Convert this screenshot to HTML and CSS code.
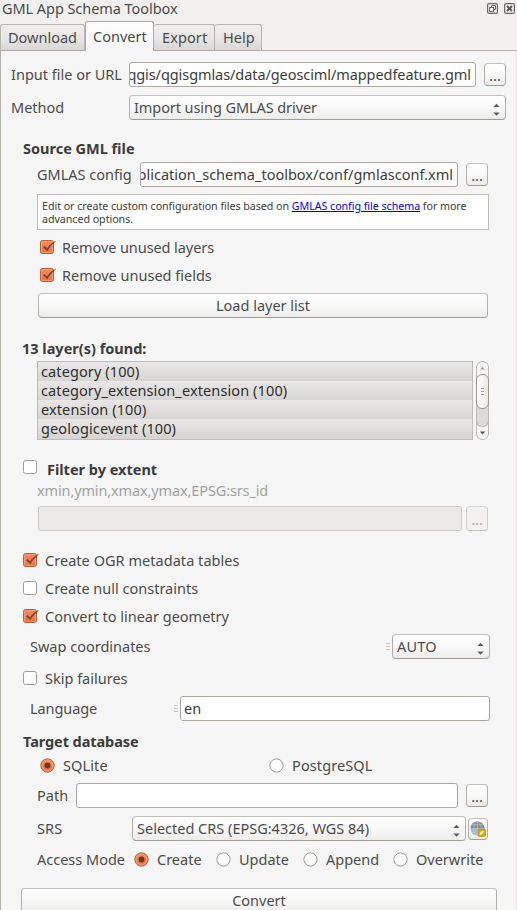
FILE: index.html
```
<!DOCTYPE html>
<html lang="en">
<head>
<meta charset="utf-8">
<title>GML App Schema Toolbox</title>
<link rel="stylesheet" href="styles.css">
</head>
<body>
<svg class="defs" width="0" height="0">
  <defs>
    <linearGradient id="orange" x1="0" y1="0" x2="0" y2="1"><stop offset="0" stop-color="#f58e66"/><stop offset="1" stop-color="#ee6f3f"/></linearGradient>
    <symbol id="checked" viewBox="0 0 17 16">
      <rect x=".5" y="1.5" width="13" height="13" rx="2" fill="url(#orange)" stroke="#bf5c37"/>
      <rect x="1.5" y="2.5" width="11" height="11" rx="1" fill="none" stroke="#f9a47f" stroke-opacity=".7"/>
      <path d="M3 8.200 4.800 7 7 9.600C9 6.400 11.500 4 15.500 2L15.800 2.400C12 5.200 9.500 8.300 7.300 12.200Z" fill="#7a4330"/>
    </symbol>
    <symbol id="unchecked" viewBox="0 0 17 16">
      <rect x=".5" y="1.500" width="13" height="13" rx="2" fill="#fff" stroke="#a09b93"/>
    </symbol>
    <symbol id="on" viewBox="0 0 15 15">
      <circle cx="7.500" cy="7.500" r="6.700" fill="url(#orange)" stroke="#bf5c37"/>
      <circle cx="7.500" cy="7.500" r="5.500" fill="none" stroke="#f9a884" stroke-opacity=".8"/>
      <circle cx="7.500" cy="7.500" r="3" fill="#693a2a"/>
    </symbol>
    <symbol id="off" viewBox="0 0 15 15">
      <circle cx="7.500" cy="7.500" r="6.600" fill="#fff" stroke="#9d9890"/>
    </symbol>
    <symbol id="updown" viewBox="0 0 7 13">
      <path d="M.4 4 3.500.8 6.600 4ZM.4 9.500 3.500 12.700 6.600 9.500Z" fill="#5e5c58"/>
    </symbol>
    <symbol id="grip" viewBox="0 0 4 8">
      <path d="M0 .5H4M0 3.500H4M0 6.500H4" stroke="#cbc9c6"/>
    </symbol>
  </defs>
</svg>

<header class="titlebar">
  <span>GML App Schema Toolbox</span>
  <span class="window-buttons">
    <svg width="11" height="11" viewBox="0 0 11 11"><rect x=".6" y=".6" width="9.800" height="9.800" rx="1.500" fill="none" stroke="#686762" stroke-width="1.200"/><path d="M4.500 4V2.500H8.500V6.500H7" fill="none" stroke="#686762"/><rect x="2.500" y="4.500" width="4" height="4" fill="none" stroke="#686762"/></svg>
    <svg width="11" height="11" viewBox="0 0 11 11"><rect x=".6" y=".6" width="9.800" height="9.800" rx="1.500" fill="none" stroke="#686762" stroke-width="1.200"/><path d="M3 3 8 8M8 3 3 8" stroke="#5c5b57" stroke-width="2"/></svg>
  </span>
</header>

<nav class="tabs">
  <span class="tab download">Download</span>
  <span class="tab active">Convert</span>
  <span class="tab export">Export</span>
  <span class="tab help">Help</span>
</nav>

<main class="panel">
  <div class="row input-file">
    <label class="label">Input file or URL</label>
    <div class="field clipped tight"><span>qgis/qgisgmlas/data/geosciml/mappedfeature.gml</span></div>
    <button class="button dots">...</button>
  </div>
  <div class="row method">
    <label class="label">Method</label>
    <div class="button select"><span class="tight">Import using GMLAS driver</span><svg width="7" height="13"><use href="#updown"/></svg></div>
  </div>

  <h2 class="source">Source GML file</h2>
  <div class="row indent config">
    <label class="label">GMLAS config</label>
    <div class="field clipped"><span>plication_schema_toolbox/conf/gmlasconf.xml</span></div>
    <button class="button dots">...</button>
  </div>
  <div class="info">Edit or create custom configuration files based on <a>GMLAS config file schema</a> for more<br>advanced options.</div>
  <div class="check nested first"><svg width="17" height="16"><use href="#checked"/></svg><span class="tight">Remove unused layers</span></div>
  <div class="check nested"><svg width="17" height="16"><use href="#checked"/></svg><span>Remove unused fields</span></div>
  <button class="button load">Load layer list</button>

  <h2 class="found">13 layer(s) found:</h2>
  <div class="layers">
    <ul class="list wide">
      <li>category (100)</li>
      <li>category_extension_extension (100)</li>
      <li>extension (100)</li>
      <li>geologicevent (100)</li>
    </ul>
    <div class="scrollbar">
      <svg width="13" height="12" viewBox="0 0 13 12"><path d="M4 8.500 6.500 5.800 9 8.500Z" fill="#a5a29d"/></svg>
      <div class="thumb"><i></i><i></i><i></i></div>
      <div class="track"></div>
      <svg width="13" height="13" viewBox="0 0 13 13"><path d="M3.800 4.500H9.200L6.500 7.500Z" fill="#5e5c58"/></svg>
    </div>
  </div>

  <div class="check filter"><svg width="17" height="16"><use href="#unchecked"/></svg><b>Filter by extent</b></div>
  <div class="hint">xmin,ymin,xmax,ymax,EPSG:srs_id</div>
  <div class="row indent extent">
    <div class="field disabled"></div>
    <button class="button dots off">...</button>
  </div>

  <div class="check ogr"><svg width="17" height="16"><use href="#checked"/></svg><span class="ogr-text">Create OGR metadata tables</span></div>
  <div class="check"><svg width="17" height="16"><use href="#unchecked"/></svg><span>Create null constraints</span></div>
  <div class="check"><svg width="17" height="16"><use href="#checked"/></svg><span>Convert to linear geometry</span></div>
  <div class="row option swap">
    <label class="label">Swap coordinates</label>
    <svg width="4" height="8"><use href="#grip"/></svg>
    <div class="button select"><span class="wider">AUTO</span><svg width="7" height="13"><use href="#updown"/></svg></div>
  </div>
  <div class="check skip"><svg width="17" height="16"><use href="#unchecked"/></svg><span>Skip failures</span></div>
  <div class="row option language">
    <label class="label tight">Language</label>
    <svg width="4" height="8"><use href="#grip"/></svg>
    <div class="field">en</div>
  </div>

  <h2 class="target tight">Target database</h2>
  <div class="radios engines">
    <span class="radio wide"><svg width="15" height="15"><use href="#on"/></svg>SQLite</span>
    <span class="radio wide"><svg width="15" height="15"><use href="#off"/></svg>PostgreSQL</span>
  </div>
  <div class="row indent path">
    <label class="label">Path</label>
    <div class="field"></div>
    <button class="button dots">...</button>
  </div>
  <div class="row indent srs">
    <label class="label wide">SRS</label>
    <div class="button select"><span>Selected CRS (EPSG:4326, WGS 84)</span><svg width="7" height="13"><use href="#updown"/></svg></div>
    <button class="button globe">
      <svg width="16" height="16" viewBox="0 0 16 16">
        <circle cx="7.500" cy="7.500" r="6.900" fill="#94b9dd"/>
        <path d="M.6 7.500a6.900 6.900 0 0 1 13.800 0Z" fill="#85898c"/>
        <path d="M7.500.6V14.400M.6 7.500H14.400M1.800 3.800H13.200M1.800 11.200H13.200" stroke="#c5cdd3" stroke-width=".6"/>
        <ellipse cx="7.500" cy="7.500" rx="3.600" ry="6.900" fill="none" stroke="#c5cdd3" stroke-width=".6"/>
        <rect x="8" y="8" width="7.500" height="7.500" rx="1" fill="#cfa90f" stroke="#b08d08" stroke-width=".6"/>
        <path d="M9.500 14 10 12 12.500 9.500 14 11 11.500 13.500Z" fill="#fff6d0"/>
      </svg>
    </button>
  </div>
  <div class="radios modes">
    <label class="label">Access Mode</label>
    <span class="radio"><svg width="15" height="15"><use href="#on"/></svg>Create</span>
    <span class="radio"><svg width="15" height="15"><use href="#off"/></svg>Update</span>
    <span class="radio"><svg width="15" height="15"><use href="#off"/></svg>Append</span>
    <span class="radio"><svg width="15" height="15"><use href="#off"/></svg>Overwrite</span>
  </div>
  <button class="button convert">Convert</button>
</main>
</body>
</html>
```
FILE: styles.css
```
* { box-sizing: border-box; }
body {
  margin: 0;
  width: 517px;
  height: 910px;
  overflow: hidden;
  display: flex;
  flex-direction: column;
  background: #f2f1f0;
  color: #4c4c4c;
  font: 14.5px/19px "Noto Sans", sans-serif;
  white-space: nowrap;
}
svg { display: block; flex: none; }
.defs { position: absolute; }
.tight { letter-spacing: -.08px; }
.wide { letter-spacing: .11px; }
.wider { letter-spacing: .2px; }

.titlebar {
  display: flex;
  justify-content: space-between;
  height: 21px;
  padding: 0 2px;
  line-height: 17px;
  letter-spacing: -.06px;
  flex: none;
}
.window-buttons { display: flex; gap: 6px; padding-top: 3px; }

.tabs { display: flex; align-items: flex-end; height: 30px; flex: none; }
.tab {
  height: 27px;
  padding: 0 0 0 7px;
  line-height: 25px;
  border: 1px solid #b9b5b0;
  border-left: 0;
  border-bottom-color: #aeaaa3;
  border-radius: 3px 3px 0 0;
  background: linear-gradient(#efeeed, #e9e8e7 50%, #d9d7d5);
}
.download { width: 85px; border-left: 1px solid #b9b5b0; }
.active {
  width: 69px;
  height: 30px;
  line-height: 29px;
  border: 1px solid #aeaaa3;
  border-bottom: 0;
  background: linear-gradient(#fdfdfd, #f6f6f6);
}
.export { width: 61px; padding-left: 8px; letter-spacing: .1px; }
.help { width: 47px; padding-left: 8px; }
.tabs::after { content: ""; flex: 1; border-bottom: 1px solid #b5b1ab; }

.panel {
  flex: none;
  display: flex;
  flex-direction: column;
  height: 880px;
  padding-top: 11px;
  background: #f6f6f6;
  border-left: 1px solid #b5b1ab;
  border-right: 1px solid #e3e1df;
}
.row { display: flex; align-items: center; height: 25px; padding-left: 10px; }
.indent { padding-left: 36px; }
.button {
  display: flex;
  align-items: center;
  justify-content: center;
  height: 25px;
  padding: 0;
  flex: none;
  color: inherit;
  font: inherit;
  border: 1px solid;
  border-color: #c4c1bd #b4b0aa #a19d96;
  border-radius: 4px;
  background: linear-gradient(#fff, #f9f9f9 50%, #ededeb);
}
.dots { width: 22px; height: 23px; padding-top: 2px; letter-spacing: -.1px; }
.off { height: 25px; color: #a9a9a9; border-color: #d8d6d4 #d0cecb #c6c3bf; background: #f3f2f1; }
.select { justify-content: space-between; padding: 0 5px 0 4px; }
.select svg { margin-top: 4px; }
.field {
  height: 25px;
  flex: none;
  padding: 0 4px;
  line-height: 22px;
  color: #3c3c3c;
  background: #fff;
  border: 1px solid #aca8a1;
  border-radius: 3px;
}
.clipped { display: flex; justify-content: flex-end; overflow: hidden; padding: 0 4px 0 0; }
.disabled { width: 424px; background: #ebeae8; border-color: #cfccc8; }
h2 { margin: 0 0 0 22px; font: inherit; font-weight: bold; color: #3c3c3c; height: 19px; }

.input-file .label { width: 118px; }
.input-file .field { width: 347px; margin-right: 8px; }
.method { margin-top: 8px; }
.method .label { width: 118px; }
.method .select { width: 377px; }

.source { margin-top: 19px; }
.config { margin-top: 4px; }
.config .label { width: 103px; }
.config .field { width: 318px; margin-right: 8px; }
.info {
  width: 452px;
  height: 36px;
  margin: 7px 0 0 36px;
  padding: 5px 4px;
  color: #3c3c3c;
  background: #fff;
  border: 1px solid #c0bdb8;
  font-size: 10.7px;
  line-height: 13px;
  letter-spacing: -.045px;
}
.info a { color: #00f; text-decoration: underline; }
.check { display: flex; align-items: center; height: 19px; margin: 9px 0 0 22px; gap: 5px; }
.check svg { margin-top: -1px; }
.nested { margin-left: 39px; }
.first { margin-top: 8px; }
.load { width: 450px; margin: 8px 0 0 37px; }
.ogr-text { letter-spacing: .04px; }

.found { margin: 21px 0 0 21px; }
.layers { display: flex; gap: 3px; height: 79px; margin: 3px 0 0 36px; }
.list {
  width: 436px;
  margin: 0;
  padding: 0 0 1px;
  list-style: none;
  border: 1px solid #bfbcb6;
  background: #d7d6d4;
  color: #2e2e2e;
}
.list li { height: 19px; padding-left: 3px; background: linear-gradient(#e9e8e7, #d7d6d4); }
.scrollbar {
  display: flex;
  flex-direction: column;
  width: 13px;
  height: 79px;
  border-radius: 7px;
  background: #f7f6f6;
  box-shadow: inset 0 0 0 1px #bbb8b3;
}
.thumb {
  position: relative;
  height: 35px;
  flex: none;
  display: flex;
  flex-direction: column;
  align-items: center;
  justify-content: center;
  gap: 2px;
  border: 1px solid #9b9790;
  border-radius: 6px;
  background: linear-gradient(90deg, #fff, #ebeae9);
  margin-top: 1px;
}
.thumb i { width: 3px; height: 1px; background: #a5a29d; }
.track {
  flex: 1;
  margin-top: -6px;
  border: 1px solid #bbb8b3;
  border-top: 0;
  border-radius: 0 0 6px 6px;
  background: #dcdbd9;
}

.filter { margin-top: 20px; gap: 7px; color: #3c3c3c; }
.filter svg { margin-top: -5px; }
.hint { margin: 2px 0 0 36px; color: #a2a2a2; letter-spacing: -.13px; }
.extent { margin-top: 6px; padding-left: 37px; }
.extent .field { margin-right: 4px; }
.ogr { margin-top: 20px; }
.option { padding-left: 29px; }
.swap { margin-top: 8px; }
.swap .label { width: 356px; }
.swap .select { width: 98px; margin-left: 2px; }
.skip { margin-top: 10px; }
.language { margin-top: 8px; }
.language .label { width: 144px; }
.language .field { width: 310px; margin-left: 2px; padding-left: 3px; }

.target { margin-top: 11px; }
.radios { display: flex; align-items: center; height: 19px; }
.radio { display: flex; align-items: center; gap: 8px; flex: none; }
.radio svg { margin-top: -1px; }
.engines { margin: 5px 0 0 39px; }
.engines .radio:first-child { width: 229px; }
.path { margin-top: 8px; }
.path .label { width: 39px; }
.path .field { width: 382px; margin-right: 8px; }
.srs { margin-top: 8px; }
.srs .label { width: 95px; }
.srs .select { width: 334px; margin-right: 2px; }
.globe { width: 20px; height: 22px; }
.modes { margin: 9px 0 0 36px; }
.modes .label { width: 97px; }
.modes .radio { width: 82px; }
.modes .radio:nth-of-type(2) { width: 87px; }
.modes .radio:nth-of-type(3) { width: 90px; }
.convert { width: 476px; margin: 19px 0 0 20px; }
```
